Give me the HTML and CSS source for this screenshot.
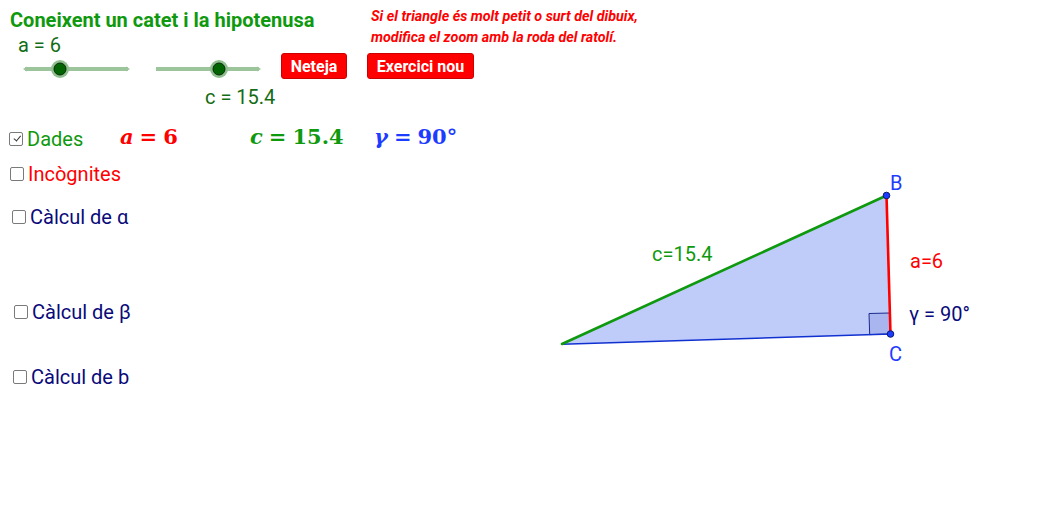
FILE: index.html
```html
<!DOCTYPE html>
<html lang="ca">
<head>
<meta charset="utf-8">
<title>Coneixent un catet i la hipotenusa</title>
<link rel="stylesheet" href="styles.css">
</head>
<body>
<div class="applet">
  <svg class="drawing" width="1058" height="527" viewBox="0 0 1058 527">
    <!-- sliders -->
    <g class="slider">
      <line x1="25" y1="69" x2="128" y2="69" class="track"/>
      <polygon points="126,66.5 130,69 126,71.5" class="track-end"/>
      <polygon points="27,66.5 23,69 27,71.5" class="track-end"/>
      <circle cx="60" cy="69" r="9" class="halo"/>
      <circle cx="60" cy="69" r="6" class="knob"/>
    </g>
    <g class="slider">
      <line x1="156" y1="69" x2="259" y2="69" class="track"/>
      <polygon points="257,66.5 261,69 257,71.5" class="track-end"/>
      <circle cx="219" cy="69" r="9" class="halo"/>
      <circle cx="219" cy="69" r="6" class="knob"/>
    </g>
    <!-- triangle -->
    <polygon points="562,344 886.5,195.5 890.5,334" class="tri-fill"/>
    <polygon points="869,313.5 889.8,313 890.5,334 869.7,334.6" class="right-angle"/>
    <line x1="562" y1="344.2" x2="890.5" y2="334" class="side-b"/>
    <line x1="562" y1="344" x2="886.5" y2="195.5" class="side-c"/>
    <line x1="886.5" y1="195.5" x2="890.5" y2="334" class="side-a"/>
    <circle cx="886.5" cy="195.5" r="3.3" class="pt"/>
    <circle cx="890.5" cy="334" r="3.3" class="pt"/>
  </svg>

  <h1 class="title">Coneixent un catet i la hipotenusa</h1>
  <div class="slider-label label-a">a = 6</div>
  <div class="slider-label label-c">c = 15.4</div>

  <p class="hint">Si el triangle és molt petit o surt del dibuix,<br>modifica el zoom amb la roda del ratolí.</p>

  <button class="btn btn-neteja">Neteja</button>
  <button class="btn btn-nou">Exercici nou</button>

  <label class="check check-dades"><span class="box checked"></span><span class="txt green">Dades</span></label>
  <label class="check check-inc"><span class="box"></span><span class="txt red">Incògnites</span></label>
  <label class="check check-alpha"><span class="box"></span><span class="txt navy">Càlcul de α</span></label>
  <label class="check check-beta"><span class="box"></span><span class="txt navy">Càlcul de β</span></label>
  <label class="check check-b"><span class="box"></span><span class="txt navy">Càlcul de b</span></label>

  <div class="formula f-a"><i>a</i><span class="eq">=</span>6</div>
  <div class="formula f-c"><i>c</i><span class="eq">=</span>15.4</div>
  <div class="formula f-g"><i>γ</i><span class="eq">=</span>90°</div>

  <div class="glabel lbl-c">c=15.4</div>
  <div class="glabel lbl-a">a=6</div>
  <div class="glabel lbl-g">γ = 90°</div>
  <div class="glabel lbl-B">B</div>
  <div class="glabel lbl-C">C</div>
</div>
</body>
</html>
```
FILE: styles.css
```css
html, body {
  margin: 0;
  padding: 0;
  background: #ffffff;
}
body {
  font-family: Roboto, "Liberation Sans", sans-serif;
}
.applet {
  position: relative;
  width: 1058px;
  height: 527px;
  overflow: hidden;
  background: #ffffff;
}
.drawing {
  position: absolute;
  left: 0;
  top: 0;
}
.track {
  stroke: #9cc59c;
  stroke-width: 4;
  stroke-linecap: butt;
}
.track-end {
  fill: #9cc59c;
}
.halo {
  fill: #8fbf8f;
}
.knob {
  fill: #006400;
  stroke: #0a2a0a;
  stroke-width: 1;
}
.tri-fill {
  fill: #bfccfa;
}
.right-angle {
  fill: #a9b5ee;
  stroke: #1d2a8c;
  stroke-width: 1;
}
.side-b {
  stroke: #1030d0;
  stroke-width: 1.6;
}
.side-c {
  stroke: #0f990f;
  stroke-width: 2.6;
  stroke-linecap: round;
}
.side-a {
  stroke: #ff0000;
  stroke-width: 2.6;
}
.pt {
  fill: #1a3cff;
  stroke: #0a1a70;
  stroke-width: 1;
}
.title {
  position: absolute;
  left: 10px;
  top: 7.5px;
  margin: 0;
  font-size: 20px;
  font-weight: 700;
  line-height: normal;
  color: #0f990f;
  white-space: nowrap;
}
.slider-label {
  position: absolute;
  font-size: 20px;
  color: #146c14;
  white-space: nowrap;
}
.label-a { left: 18px; top: 32.5px; }
.label-c { left: 205px; top: 84.5px; }
.hint {
  position: absolute;
  left: 371px;
  top: 5.5px;
  margin: 0;
  font-size: 14.3px;
  line-height: 21.5px;
  font-weight: 700;
  font-style: italic;
  color: #ff0000;
  white-space: nowrap;
}
.btn {
  position: absolute;
  top: 53px;
  height: 26px;
  border: 1px solid #cc0000;
  border-radius: 3px;
  background: #ff0000;
  color: #ffffff;
  font-family: Roboto, "Liberation Sans", sans-serif;
  font-size: 16px;
  font-weight: 700;
  padding: 0;
  display: flex;
  align-items: center;
  justify-content: center;
}
.btn-neteja { left: 281px; width: 66px; }
.btn-nou { left: 367px; width: 107px; }
.check {
  position: absolute;
  display: flex;
  align-items: center;
  gap: 4px;
  white-space: nowrap;
}
.box {
  width: 12px;
  height: 12px;
  border: 1px solid #7a7a7a;
  border-radius: 2px;
  background: #ffffff;
  position: relative;
  flex: none;
}
.box.checked::after {
  content: "";
  position: absolute;
  left: 2.5px;
  top: 1.5px;
  width: 6px;
  height: 3px;
  border-left: 1.6px solid #333333;
  border-bottom: 1.6px solid #333333;
  transform: rotate(-50deg) translate(0, 1px);
  transform-origin: center;
}
.txt {
  font-size: 20px;
  line-height: normal;
}
.green { color: #0f990f; }
.red { color: #ff0000; }
.navy { color: #0a0a7a; }
.check-dades { left: 9px; top: 127px; }
.check-inc { left: 10px; top: 161.5px; }
.check-alpha { left: 12px; top: 204.5px; }
.check-beta { left: 14px; top: 299.5px; }
.check-b { left: 13px; top: 364.5px; }
.formula {
  position: absolute;
  top: 124.7px;
  font-family: "DejaVu Serif", "Liberation Serif", serif;
  font-weight: 700;
  font-size: 21px;
  line-height: 24px;
  white-space: nowrap;
}
.formula i {
  font-style: italic;
}
.formula .eq {
  margin: 0 6px;
}
.f-a { left: 120px; color: #ff0000; }
.f-c { left: 250px; color: #0f990f; }
.f-g { left: 374px; color: #1e3cff; }
.glabel {
  position: absolute;
  font-size: 20px;
  line-height: normal;
  white-space: nowrap;
}
.lbl-c { left: 652px; top: 241.5px; color: #0f990f; }
.lbl-a { left: 910px; top: 248.8px; color: #ff0000; }
.lbl-g { left: 909px; top: 302px; color: #0a0a7a; }
.lbl-B { left: 890px; top: 170.5px; color: #1e3cff; }
.lbl-C { left: 889px; top: 341.5px; color: #1e3cff; }
```
